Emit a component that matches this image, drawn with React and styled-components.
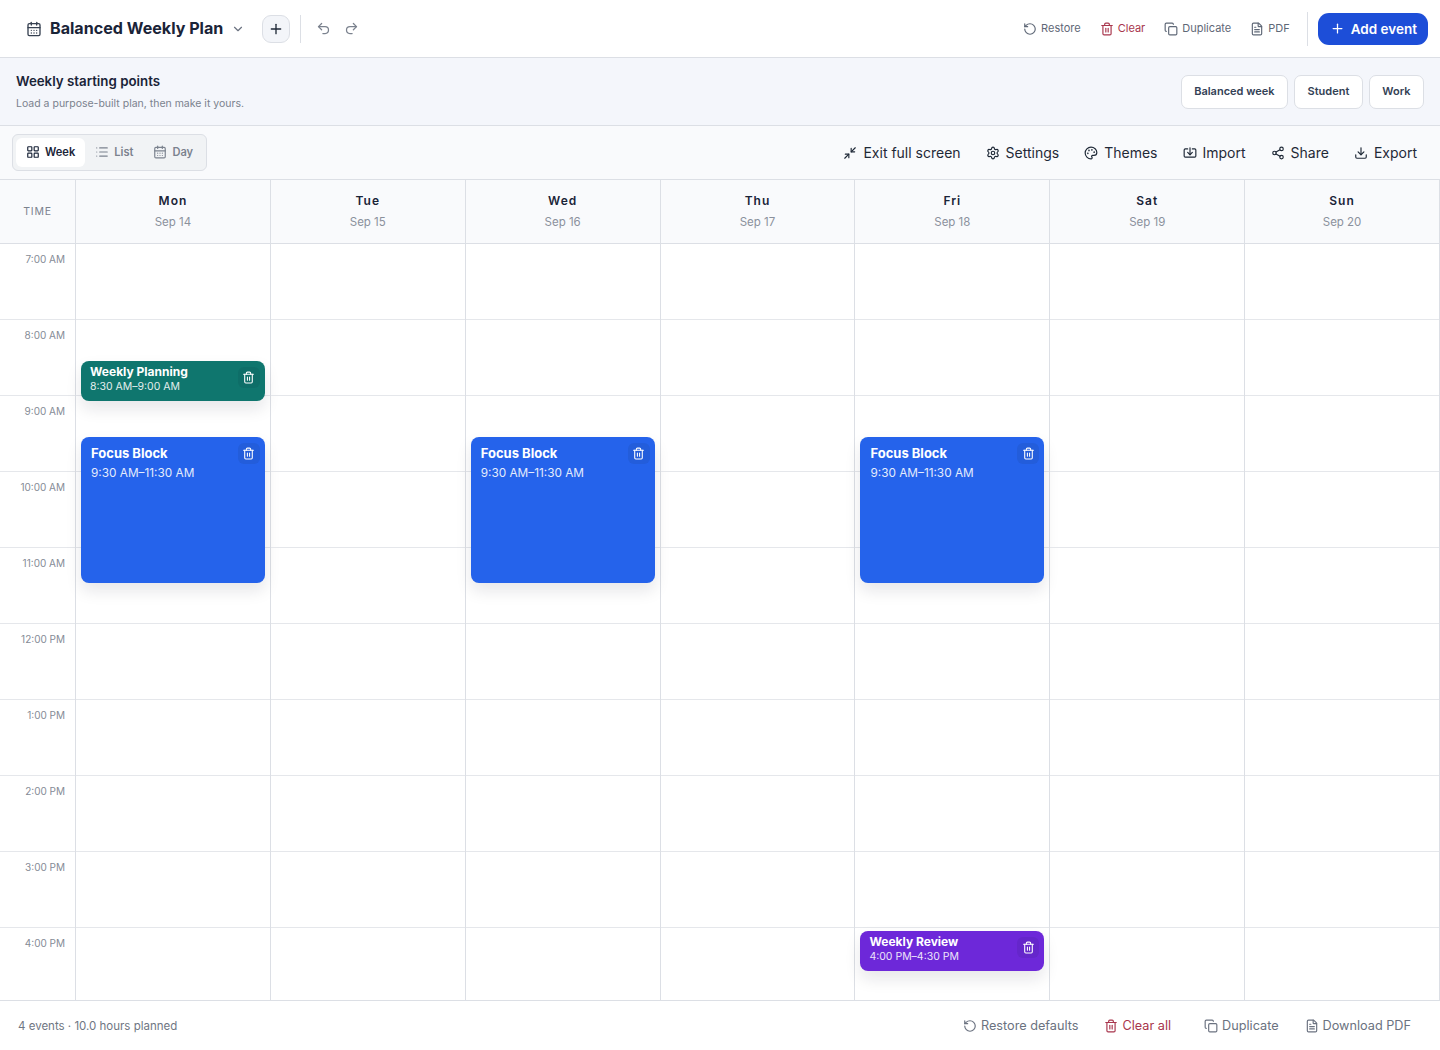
import React from "react";
import styled, { createGlobalStyle } from "styled-components";
import {
  CalendarDays,
  ChevronDown,
  Copy,
  Download,
  FileText,
  Import,
  LayoutGrid,
  List,
  Minimize2,
  Palette,
  Plus,
  Redo2,
  RotateCcw,
  Settings,
  Share2,
  Trash2,
  Undo2,
} from "lucide-react";

const GlobalStyle = createGlobalStyle`
  html, body {
    margin: 0;
    padding: 0;
    background: #fff;
    font-family: "Inter", "Liberation Sans", sans-serif;
    color: #111c33;
  }
  * { box-sizing: border-box; }
`;

const Page = styled.div`
  width: 1440px;
  height: 1050px;
  display: flex;
  flex-direction: column;
  overflow: hidden;
  background: #fff;
`;

const TopBar = styled.header`
  height: 58px;
  flex: none;
  display: flex;
  align-items: center;
  justify-content: space-between;
  padding: 0 12px 0 26px;
  border-bottom: 1px solid #dcdfe5;
`;

const Cluster = styled.div`
  display: flex;
  align-items: center;
  gap: ${(p) => p.$gap || 0}px;
`;

const PlanTitle = styled.h1`
  margin: 0 0 2px 8px;
  font-size: 16.1px;
  font-weight: 700;
  color: #1a2438;
`;

const ChevronSlot = styled.span`
  display: flex;
  margin: 0 17px 0 8px;
  color: #6b7280;
`;

const NewPlanButton = styled.button`
  width: 28px;
  height: 28px;
  display: flex;
  align-items: center;
  justify-content: center;
  padding: 0;
  border: 1px solid #dcdfe5;
  border-radius: 9px;
  background: #f3f5f9;
  color: #1f2937;
`;

const VerticalRule = styled.span`
  width: 1px;
  height: ${(p) => p.$height || 28}px;
  background: #dcdfe5;
  margin: ${(p) => p.$margin || "0"};
`;

const HistoryButton = styled.button`
  display: flex;
  padding: 0;
  border: 0;
  background: none;
  color: #7b828e;
`;

const QuickAction = styled.button`
  display: flex;
  align-items: center;
  gap: 4px;
  padding: 0;
  border: 0;
  background: none;
  font: inherit;
  font-size: 11px;
  font-weight: 400;
  line-height: 14px;
  color: ${(p) => (p.$danger ? "#a8354c" : "#5f6877")};

  span {
    margin-top: -2px;
  }
`;

const AddButton = styled.button`
  height: 32px;
  display: flex;
  align-items: center;
  gap: 6px;
  padding: 0 11px 0 12px;
  border: 0;
  border-radius: 11px;
  background: #1d4ed8;
  color: #fff;
  font: inherit;
  font-size: 13.5px;
  font-weight: 600;
`;

const TemplateBand = styled.section`
  height: 68px;
  flex: none;
  display: flex;
  align-items: center;
  justify-content: space-between;
  padding: 0 16px;
  background: #f4f6fb;
  border-bottom: 1px solid #dcdfe5;
`;

const BandTitle = styled.div`
  font-size: 13.3px;
  font-weight: 600;
  color: #1a2438;
  margin-bottom: 8px;
`;

const BandNote = styled.div`
  font-size: 10.5px;
  color: #7b828e;
`;

const TemplateButton = styled.button`
  height: 34px;
  padding: 0 12.5px 2px;
  border: 1px solid #dcdfe5;
  border-radius: 7px;
  background: #fff;
  font: inherit;
  font-size: 11px;
  font-weight: 600;
  color: #334155;
`;

const ViewBar = styled.div`
  height: 54px;
  flex: none;
  display: flex;
  align-items: center;
  justify-content: space-between;
  padding: 0 23px 0 12px;
  background: #f9fafc;
  border-bottom: 1px solid #dcdfe5;
`;

const ViewSwitch = styled.div`
  height: 37px;
  display: flex;
  align-items: center;
  padding: 0 3px;
  border: 1px solid #dcdfe5;
  border-radius: 6px;
  background: #f1f3f5;
`;

const ViewTab = styled.button`
  height: 29px;
  display: flex;
  align-items: center;
  gap: 5px;
  padding: 0 10px 1px;
  border: 0;
  border-radius: 6px;
  background: ${(p) => (p.$active ? "#fff" : "transparent")};
  font: inherit;
  font-size: 11.1px;
  font-weight: 600;
  color: ${(p) => (p.$active ? "#1a2438" : "#7b828e")};
`;

const ToolButton = styled.button`
  display: flex;
  align-items: center;
  gap: 6px;
  padding: 0;
  border: 0;
  background: none;
  font: inherit;
  font-size: 14px;
  font-weight: 400;
  color: #1f2937;
`;

const Calendar = styled.div`
  flex: 1;
  min-height: 0;
  overflow: hidden;
  display: flex;
  flex-direction: column;
`;

const HeaderRow = styled.div`
  height: 64px;
  flex: none;
  display: grid;
  grid-template-columns: 76px repeat(7, 1fr);
  background: #f9fafc;
  border-bottom: 1px solid #dcdfe5;
`;

const TimeHead = styled.div`
  display: flex;
  align-items: center;
  justify-content: center;
  border-right: 1px solid #dcdfe5;
  font-size: 10.5px;
  letter-spacing: 0.8px;
  color: #7b828e;
`;

const DayHead = styled.div`
  display: flex;
  flex-direction: column;
  align-items: center;
  justify-content: center;
  gap: 7px;
  padding-bottom: 2px;
  border-right: 1px solid #dcdfe5;
`;

const DayName = styled.div`
  font-size: 12px;
  font-weight: 600;
  letter-spacing: 1px;
  color: #1a2438;
`;

const DayDate = styled.div`
  font-size: 11.5px;
  color: #8b919c;
`;

const Body = styled.div`
  flex: 1;
  min-height: 0;
  overflow: hidden;
  display: grid;
  grid-template-columns: 76px repeat(7, 1fr);
  align-content: start;
  border-bottom: 1px solid #dcdfe5;
`;

const TimeColumn = styled.div`
  border-right: 1px solid #dcdfe5;
`;

const TimeCell = styled.div`
  height: 76px;
  padding: 9px 10px 0 0;
  text-align: right;
  font-size: 10px;
  color: #858b96;
  border-bottom: 1px solid #e5e7eb;
`;

const DayColumn = styled.div`
  position: relative;
  border-right: 1px solid #dcdfe5;
`;

const HourCell = styled.div`
  height: 76px;
  border-bottom: 1px solid #e5e7eb;
`;

const EventCard = styled.article`
  position: absolute;
  left: 5px;
  right: 5px;
  top: ${(p) => p.$top}px;
  height: ${(p) => p.$height}px;
  padding: ${(p) => (p.$compact ? "3px 9px" : "7px 10px")};
  border-radius: 8px;
  background: ${(p) => p.$color};
  color: #fff;
  box-shadow: 0 8px 16px rgba(15, 23, 42, 0.1);
`;

const EventName = styled.div`
  font-size: ${(p) => (p.$compact ? 12 : 13)}px;
  line-height: ${(p) => (p.$compact ? 16 : 18)}px;
  font-weight: 700;
`;

const EventTime = styled.div`
  margin-top: ${(p) => (p.$compact ? 0 : 3)}px;
  font-size: ${(p) => (p.$compact ? 10.5 : 11.8)}px;
  line-height: ${(p) => (p.$compact ? 13 : 17)}px;
  opacity: 0.88;
`;

const DeleteButton = styled.button`
  position: absolute;
  top: 6px;
  right: 5px;
  width: 22px;
  height: 21px;
  display: flex;
  align-items: center;
  justify-content: center;
  padding: 0;
  border: 0;
  border-radius: 6px;
  background: rgba(15, 23, 42, 0.08);
  color: #fff;
`;

const Footer = styled.footer`
  height: 49px;
  flex: none;
  display: flex;
  align-items: center;
  justify-content: space-between;
  padding: 0 29px 0 18px;
`;

const FooterNote = styled.div`
  font-size: 11.5px;
  color: #6f7683;
`;

const FooterAction = styled.button`
  display: flex;
  align-items: center;
  gap: 4px;
  padding: 0;
  margin-right: ${(p) => (p.$danger ? 7 : 0)}px;
  border: 0;
  background: none;
  font: inherit;
  font-size: 12.7px;
  color: ${(p) => (p.$danger ? "#a8354c" : "#6b7280")};
`;

const hours = ["7:00 AM", "8:00 AM", "9:00 AM", "10:00 AM", "11:00 AM", "12:00 PM", "1:00 PM", "2:00 PM", "3:00 PM", "4:00 PM"];

const focus = { name: "Focus Block", time: "9:30 AM–11:30 AM", color: "#2563eb", top: 193, height: 146 };

const days = [
  {
    name: "Mon",
    date: "Sep 14",
    events: [
      { name: "Weekly Planning", time: "8:30 AM–9:00 AM", color: "#0f766e", top: 117, height: 40, compact: true },
      focus,
    ],
  },
  { name: "Tue", date: "Sep 15", events: [] },
  { name: "Wed", date: "Sep 16", events: [focus] },
  { name: "Thu", date: "Sep 17", events: [] },
  {
    name: "Fri",
    date: "Sep 18",
    events: [
      focus,
      { name: "Weekly Review", time: "4:00 PM–4:30 PM", color: "#6d28d9", top: 687, height: 40, compact: true },
    ],
  },
  { name: "Sat", date: "Sep 19", events: [] },
  { name: "Sun", date: "Sep 20", events: [] },
];

function Event({ event }) {
  return (
    <EventCard $top={event.top} $height={event.height} $color={event.color} $compact={event.compact}>
      <EventName $compact={event.compact}>{event.name}</EventName>
      <EventTime $compact={event.compact}>{event.time}</EventTime>
      <DeleteButton aria-label="Delete event">
        <Trash2 size={13} strokeWidth={2} />
      </DeleteButton>
    </EventCard>
  );
}

export default function App() {
  return (
    <Page>
      <GlobalStyle />
      <TopBar>
        <Cluster>
          <CalendarDays size={16} color="#374151" />
          <PlanTitle>Balanced Weekly Plan</PlanTitle>
          <ChevronSlot>
            <ChevronDown size={14} />
          </ChevronSlot>
          <NewPlanButton aria-label="New plan">
            <Plus size={16} />
          </NewPlanButton>
          <VerticalRule $margin="0 15px 0 10px" />
          <Cluster $gap={13}>
            <HistoryButton aria-label="Undo">
              <Undo2 size={15} />
            </HistoryButton>
            <HistoryButton aria-label="Redo">
              <Redo2 size={15} />
            </HistoryButton>
          </Cluster>
        </Cluster>
        <Cluster>
          <Cluster $gap={19}>
            <QuickAction>
              <RotateCcw size={14} />
              <span>Restore</span>
            </QuickAction>
            <QuickAction $danger>
              <Trash2 size={14} />
              <span>Clear</span>
            </QuickAction>
            <QuickAction>
              <Copy size={14} />
              <span>Duplicate</span>
            </QuickAction>
            <QuickAction>
              <FileText size={14} />
              <span>PDF</span>
            </QuickAction>
          </Cluster>
          <VerticalRule $height={34} $margin="0 10px 0 17px" />
          <AddButton>
            <Plus size={15} />
            Add event
          </AddButton>
        </Cluster>
      </TopBar>

      <TemplateBand>
        <div>
          <BandTitle>Weekly starting points</BandTitle>
          <BandNote>Load a purpose-built plan, then make it yours.</BandNote>
        </div>
        <Cluster $gap={6}>
          <TemplateButton>Balanced week</TemplateButton>
          <TemplateButton>Student</TemplateButton>
          <TemplateButton>Work</TemplateButton>
        </Cluster>
      </TemplateBand>

      <ViewBar>
        <ViewSwitch>
          <ViewTab $active>
            <LayoutGrid size={14} />
            Week
          </ViewTab>
          <ViewTab>
            <List size={14} />
            List
          </ViewTab>
          <ViewTab>
            <CalendarDays size={14} />
            Day
          </ViewTab>
        </ViewSwitch>
        <Cluster $gap={25}>
          <ToolButton>
            <Minimize2 size={14} />
            Exit full screen
          </ToolButton>
          <ToolButton>
            <Settings size={14} />
            Settings
          </ToolButton>
          <ToolButton>
            <Palette size={14} />
            Themes
          </ToolButton>
          <ToolButton>
            <Import size={14} />
            Import
          </ToolButton>
          <ToolButton>
            <Share2 size={14} />
            Share
          </ToolButton>
          <ToolButton>
            <Download size={14} />
            Export
          </ToolButton>
        </Cluster>
      </ViewBar>

      <Calendar>
        <HeaderRow>
          <TimeHead>TIME</TimeHead>
          {days.map((day) => (
            <DayHead key={day.name}>
              <DayName>{day.name}</DayName>
              <DayDate>{day.date}</DayDate>
            </DayHead>
          ))}
        </HeaderRow>
        <Body>
          <TimeColumn>
            {hours.map((hour) => (
              <TimeCell key={hour}>{hour}</TimeCell>
            ))}
          </TimeColumn>
          {days.map((day) => (
            <DayColumn key={day.name}>
              {hours.map((hour) => (
                <HourCell key={hour} />
              ))}
              {day.events.map((event) => (
                <Event key={event.name} event={event} />
              ))}
            </DayColumn>
          ))}
        </Body>
      </Calendar>

      <Footer>
        <FooterNote>4 events · 10.0 hours planned</FooterNote>
        <Cluster $gap={26}>
          <FooterAction>
            <RotateCcw size={14} />
            Restore defaults
          </FooterAction>
          <FooterAction $danger>
            <Trash2 size={14} />
            Clear all
          </FooterAction>
          <FooterAction>
            <Copy size={14} />
            Duplicate
          </FooterAction>
          <FooterAction>
            <FileText size={14} />
            Download PDF
          </FooterAction>
        </Cluster>
      </Footer>
    </Page>
  );
}
